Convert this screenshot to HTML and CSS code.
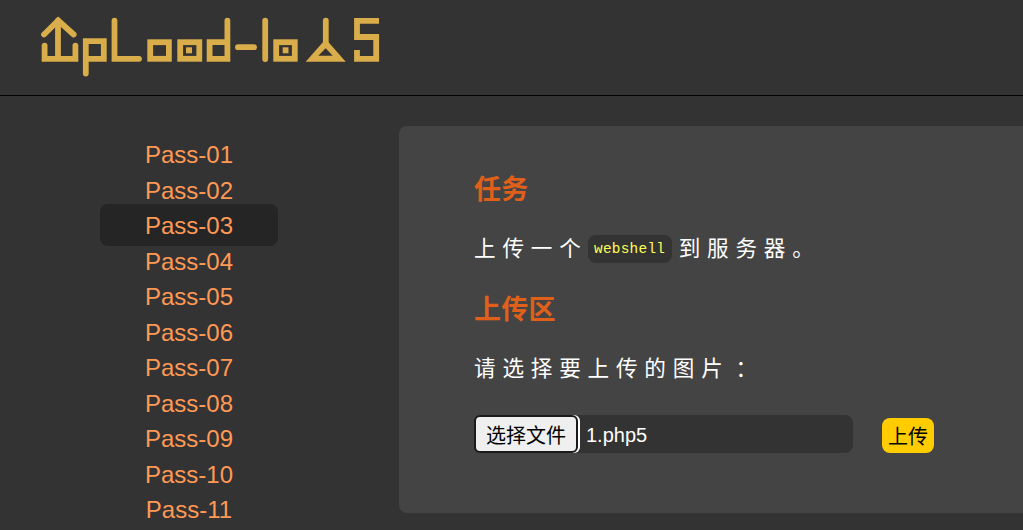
FILE: index.html
```html
<!DOCTYPE html>
<html lang="zh">
<head>
<meta charset="utf-8">
<title>Upload-labs</title>
<link rel="stylesheet" href="styles.css">
</head>
<body>
<header class="header">
<svg class="logo" width="345" height="95" viewBox="35 0 345 95" aria-label="Upload-labs logo">
<g fill="none" stroke="#d9ad4a" stroke-width="5.800" stroke-linejoin="miter" stroke-linecap="round">
<path d="M44 34.500 58.200 20.500 73.700 34.500"/>
<path d="M58 20.500V58"/>
<path d="M44.600 45.600V58.800H75.400V45.600"/>
<path d="M85.800 73.500V41.200H103.800V58.800H85.800"/>
<path d="M114.500 20.600V58.800H139"/>
<rect x="150.200" y="42.200" width="18.700" height="16.600"/>
<rect x="180.200" y="42.200" width="19.100" height="16.600"/>
<path d="M227.400 20.600V58.800H209.600V42.200H227.400"/>
<path d="M238 47.200H254"/>
<path d="M265.200 20.600V59"/>
<rect x="276.200" y="42.200" width="18.600" height="16.600"/>
<path d="M325.800 20.600V45"/>
<path d="M379 20.800H357V37H376.200V58.800H357V50" stroke-linecap="butt"/>
</g>
<rect x="186" y="47.300" width="6" height="6" fill="#d9ad4a"/>
<rect x="282.700" y="47.300" width="5.800" height="6" fill="#d9ad4a"/>
<path fill="#d9ad4a" fill-rule="evenodd" d="M325.700 39 345.700 61.700H305.700ZM325.700 48.300 318.300 55.700H332.700Z"/>
</svg>
</header>
<div class="page">
<nav class="menu">
<a class="item">Pass-01</a>
<a class="item">Pass-02</a>
<a class="item current">Pass-03</a>
<a class="item">Pass-04</a>
<a class="item">Pass-05</a>
<a class="item">Pass-06</a>
<a class="item">Pass-07</a>
<a class="item">Pass-08</a>
<a class="item">Pass-09</a>
<a class="item">Pass-10</a>
<a class="item">Pass-11</a>
</nav>
<main class="panel">
<h2 class="title">任务</h2>
<p class="text">上传一个<code class="code">webshell</code>到服务器。</p>
<h2 class="title second">上传区</h2>
<p class="text">请选择要上传的图片<span class="colon">：</span></p>
<form class="form">
<div class="file"><button type="button" class="choose">选择文件</button><span class="name">1.php5</span></div>
<button type="button" class="submit">上传</button>
</form>
</main>
</div>
</body>
</html>
```
FILE: styles.css
```css
html, body { margin: 0; height: 530px; overflow: hidden; }
body { background: #333; font-family: "Liberation Sans", "Noto Sans CJK SC", sans-serif; color: #fff; }
.header { height: 95px; border-bottom: 1px solid #000; }
.logo { display: block; margin-left: 35px; }
.page { display: flex; padding-top: 30px; }
.menu { width: 178px; margin-left: 100px; margin-right: 121px; padding-top: 11px; display: flex; flex-direction: column; flex: none; }
.item { height: 35.500px; line-height: 35.500px; text-align: center; font-size: 24px; color: #ff9955; }
.current { background: #252525; border-radius: 8px; box-sizing: border-box; height: 42px; padding-top: 1px; line-height: 41px; margin: -4px 0 -2.500px; }
.panel { flex: 1; height: 387px; background: #444; border-radius: 8px 0 0 8px; padding-left: 75px; box-sizing: border-box; }
.title { margin: 0; font-size: 27px; line-height: 32px; color: #e0601a; font-weight: bold; padding-top: 48px; letter-spacing: 0.300px; }
.second { padding-top: 30px; }
.text { margin: 28px 0 0; font-size: 21.600px; line-height: 30px; letter-spacing: 6.800px; display: flex; align-items: center; }
.colon { margin-left: 6px; }
.code { font-family: "Liberation Mono", monospace; font-size: 14.400px; letter-spacing: 0.250px; color: #ffff55; background: #333; border-radius: 8px; padding: 0 6.500px; margin: 0 7px 0 0; height: 28px; line-height: 28px; }
.form { display: flex; margin-top: 31px; align-items: flex-start; }
.file { width: 379px; height: 38px; background: #333; border-radius: 8px; display: flex; align-items: center; box-sizing: border-box; }
.choose { width: 104px; height: 38px; box-sizing: border-box; background: #efefef; border: 2px solid #1a1a1a; border-radius: 6px; box-shadow: 2px 0 0 #fff; font: 20px "Liberation Sans", "Noto Sans CJK SC", sans-serif; color: #000; padding: 0; }
.name { font-size: 20px; margin: 2px 0 0 8px; }
.submit { width: 52px; height: 35px; margin: 3px 0 0 29px; background: #ffcc00; border: 0; border-radius: 8px; font: 20px "Noto Sans CJK SC", sans-serif; color: #000; padding: 0; }
```
